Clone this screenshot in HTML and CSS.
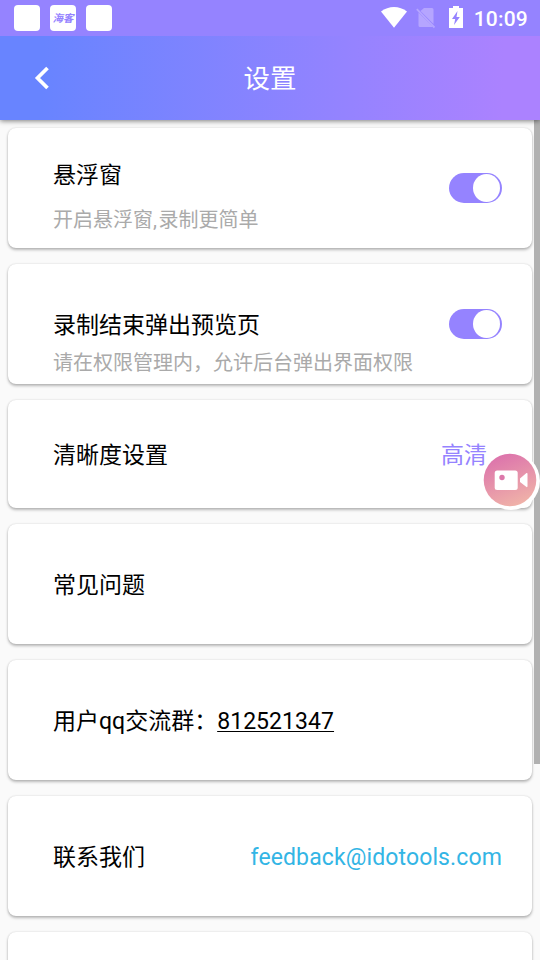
FILE: index.html
```html
<!DOCTYPE html>
<html lang="zh-CN">
<head>
<meta charset="utf-8">
<title>设置</title>
<link rel="stylesheet" href="styles.css">
</head>
<body>
<div class="screen">
  <div class="status">
    <span class="notice"></span>
    <span class="notice">海客</span>
    <span class="notice"></span>
    <span class="spacer"></span>
    <svg class="wifi" width="26" height="21" viewBox="0 0 26 21"><path d="M0 4.600C7.500-1.400 18.500-1.400 26 4.600L13 20.700z" fill="#fff"/></svg>
    <svg class="sim" width="20" height="22" viewBox="0 0 20 22"><path d="M8 1h8q1.500 0 1.500 1.500V17L4.500 4zM2.500 5.500L17 20H4q-1.500 0-1.500-1.500z" fill="#b5a5ff"/><path d="M.8 2.200L18.500 20.500" stroke="#b5a5ff" stroke-width="1.800"/></svg>
    <svg class="battery" width="14" height="22" viewBox="0 0 14 22"><path fill-rule="evenodd" d="M4 0h6v2h4v20H0V2h4zM8.500 5L3 13h3.200L5 19l5.800-8H7.500z" fill="#fff"/></svg>
    <span class="clock">10:09</span>
  </div>
  <header class="toolbar">
    <svg class="back" width="16" height="24" viewBox="0 0 16 24"><path d="M13.500 2L3.500 12l10 10" fill="none" stroke="#fff" stroke-width="3.700"/></svg>
    <h1>设置</h1>
  </header>
  <main class="list">
    <section class="card">
      <div class="label first"><div class="title">悬浮窗</div><div class="hint">开启悬浮窗<span class="comma">,</span>录制更简单</div></div>
      <span class="toggle"></span>
    </section>
    <section class="card">
      <div class="label second"><div class="title">录制结束弹出预览页</div><div class="hint">请在权限管理内，允许后台弹出界面权限</div></div>
      <span class="toggle"></span>
    </section>
    <section class="card single short"><div class="title">清晰度设置</div><span class="quality">高清</span></section>
    <section class="card single"><div class="title">常见问题</div></section>
    <section class="card single"><div class="title">用户qq交流群：<span class="group">812521347</span></div></section>
    <section class="card single"><div class="title">联系我们</div><span class="mail">feedback@idotools.com</span></section>
    <section class="card"></section>
  </main>
  <div class="scrollbar"></div>
  <div class="recorder">
    <svg width="58" height="58" viewBox="0 0 58 58">
      <defs><linearGradient id="pink" x1="0.300" y1="0" x2="0.700" y2="1"><stop offset="0" stop-color="#dc72ac"/><stop offset="1" stop-color="#f0b4a8"/></linearGradient></defs>
      <circle cx="29" cy="29" r="29" fill="#fff"/>
      <circle cx="28" cy="28" r="26.300" fill="url(#pink)"/>
      <rect x="12.700" y="18.500" width="23" height="19.500" rx="2.500" fill="#fff"/>
      <circle cx="20" cy="25.500" r="2.700" fill="#dc78aa"/>
      <path d="M38 26.500L44.500 21q1-.5 1 1v12q0 1.500-1 1L38 30z" fill="#fff"/>
    </svg>
  </div>
</div>
</body>
</html>
```
FILE: styles.css
```css
* { box-sizing: border-box; }
body {
  margin: 0;
  font-family: Roboto, "Noto Sans CJK SC", sans-serif;
  background: #fafafa;
}
.screen {
  position: relative;
  width: 540px;
  height: 960px;
  overflow: hidden;
  display: flex;
  flex-direction: column;
}
.status {
  flex: none;
  height: 36px;
  padding: 0 12px 0 14px;
  display: flex;
  align-items: center;
  background: #9583ff;
  color: #fff;
  z-index: 2;
}
.notice {
  width: 26px;
  height: 26px;
  margin-right: 10px;
  border-radius: 4px;
  background: #fff;
  color: #9583ff;
  font: italic 700 10.500px/26px "Noto Sans CJK SC", sans-serif;
  text-align: center;
}
.spacer { flex: 1; }
.wifi { margin-right: 9px; margin-bottom: 1px; }
.sim { margin-right: 13px; }
.battery { margin-right: 11px; margin-bottom: 2px; }
.clock { font-size: 21px; line-height: 24px; font-weight: 500; padding-top: 2px; letter-spacing: .2px; }
.toolbar {
  flex: none;
  height: 84px;
  display: grid;
  grid-template-columns: 34px 1fr 34px;
  align-items: center;
  background: linear-gradient(92deg, #6884ff 8%, #9583ff 65%, #ab82ff 93%);
  box-shadow: 0 1px 5px rgba(0, 0, 0, .5);
  z-index: 1;
}
.back { margin-left: 34px; }
h1 {
  margin: 0;
  padding-top: 2px;
  color: #fff;
  font-size: 26.500px;
  line-height: 36px;
  font-weight: 400;
  text-align: center;
}
.list {
  display: flex;
  flex-direction: column;
  gap: 16px;
  padding: 8px;
}
.card {
  flex: none;
  height: 120px;
  padding: 0 30px 0 45px;
  display: flex;
  align-items: center;
  justify-content: space-between;
  border-radius: 8px;
  background: #fff;
  box-shadow: 0 2px 3px rgba(0, 0, 0, .26), 0 0 2px rgba(0, 0, 0, .16);
}
.card.single { padding-top: 4px; }
.card.short { height: 108px; }
.label { align-self: flex-start; white-space: nowrap; }
.title { font-size: 23px; line-height: 32px; color: #000; }
.hint { font-size: 20px; line-height: 28px; color: #aaa; }
.comma { letter-spacing: 1.500px; }
.first { padding-top: 32px; }
.first .hint { margin-top: 14px; }
.second { padding-top: 46px; }
.second .hint { margin-top: 7px; }
.toggle {
  flex: none;
  width: 53px;
  height: 30px;
  padding: 1px 2px;
  display: flex;
  justify-content: flex-end;
  border-radius: 15px;
  background: #9583ff;
}
.toggle::after {
  content: "";
  width: 27px;
  height: 28px;
  border-radius: 50%;
  background: #fff;
}
.quality { margin-right: 15px; font-size: 23px; line-height: 32px; color: #9583ff; }
.group { letter-spacing: .06px; text-decoration: underline; text-decoration-thickness: 1px; text-underline-offset: 2px; }
.mail { font-size: 23px; line-height: 32px; letter-spacing: .12px; color: #33b5e5; }
.scrollbar {
  position: absolute;
  top: 120px;
  right: 0;
  width: 6px;
  height: 644px;
  background: #b1b1b1;
}
.recorder {
  position: absolute;
  left: 482px;
  top: 452px;
  width: 58px;
  height: 58px;
}
```
